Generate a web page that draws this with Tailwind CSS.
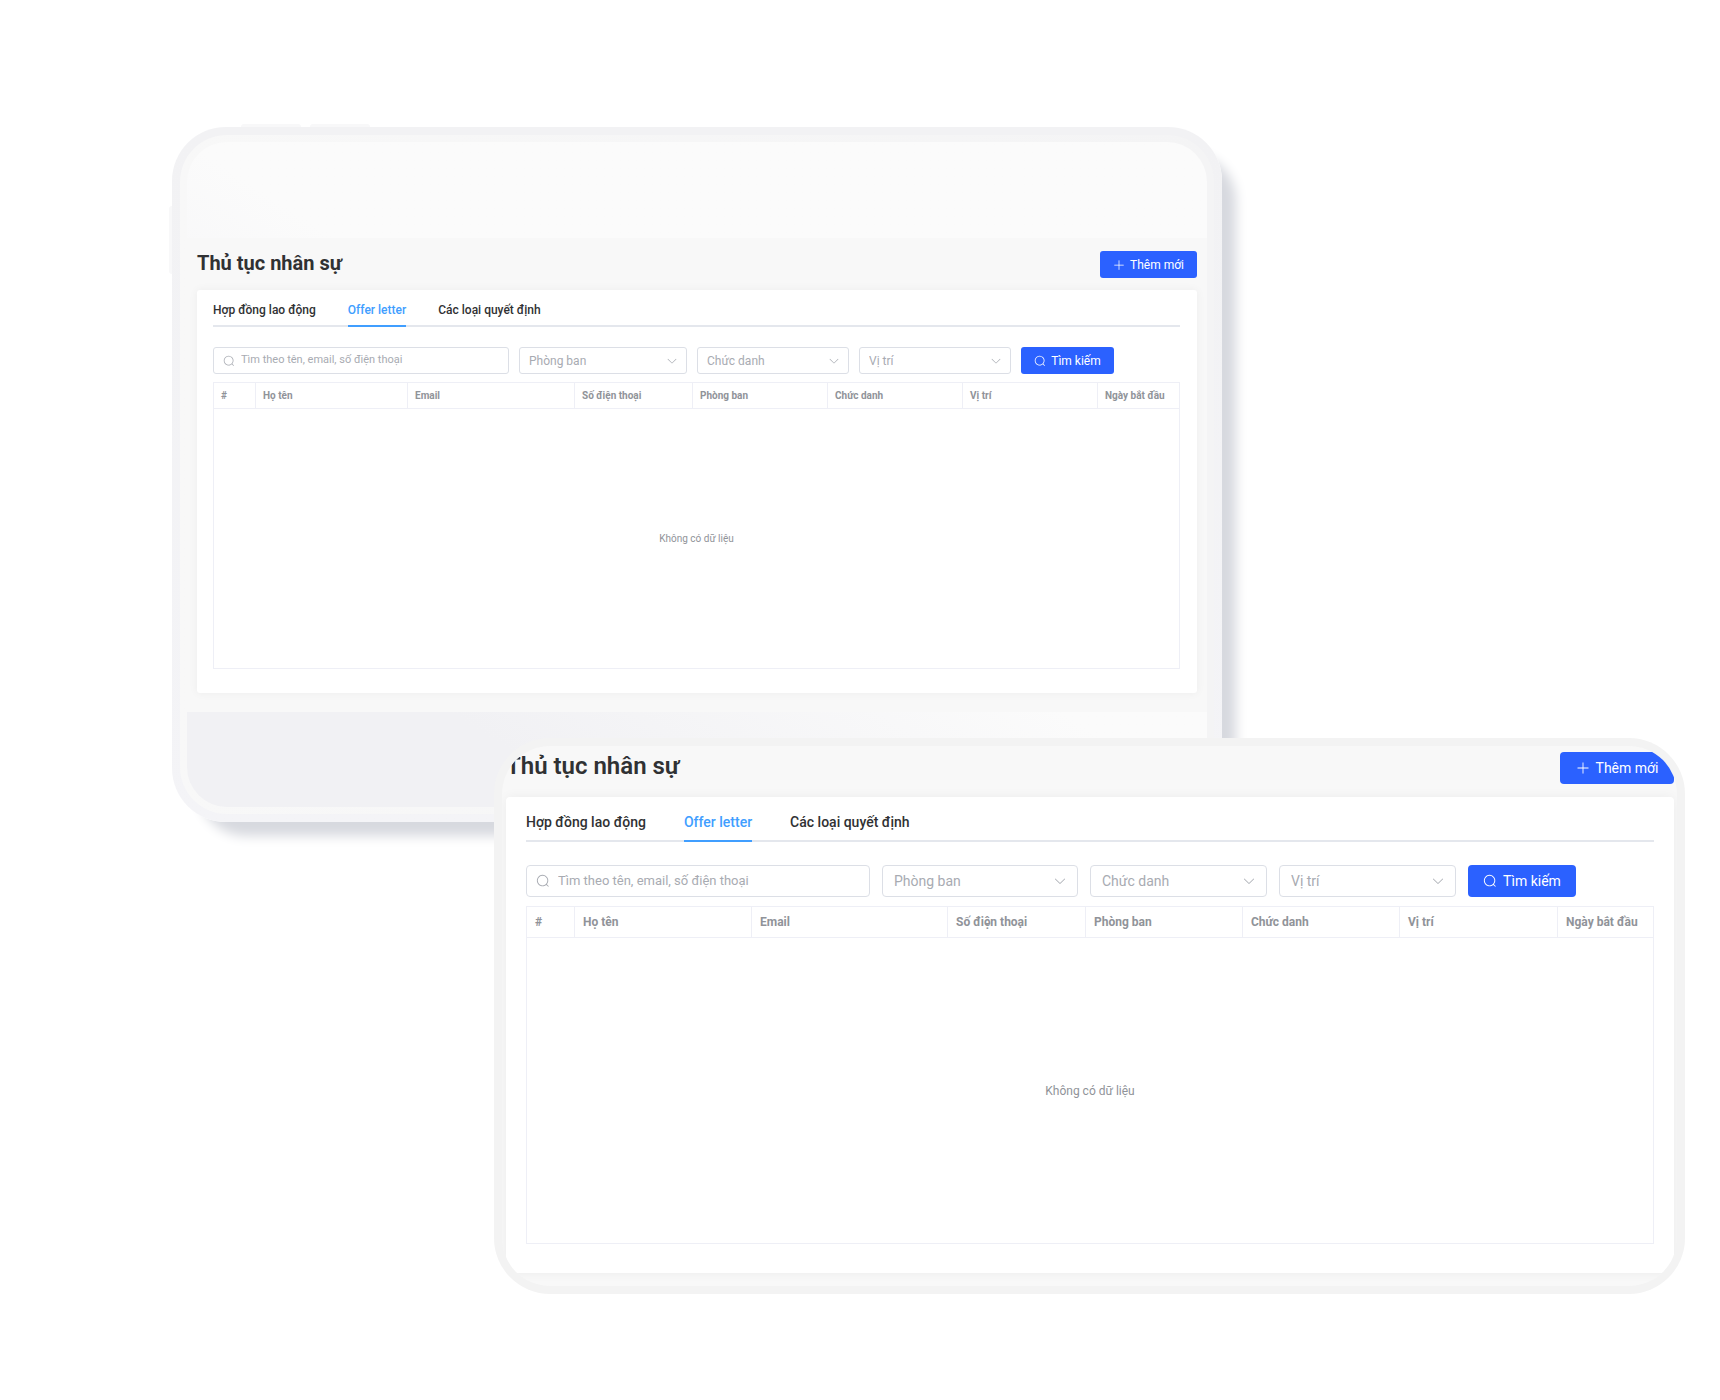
<!DOCTYPE html>
<html lang="vi">
<head>
    <meta charset="UTF-8">
    <meta name="viewport" content="width=device-width, initial-scale=1.0">
    <title>Thủ tục nhân sự</title>
    <script src="https://cdn.jsdelivr.net/npm/@tailwindcss/browser@4"></script>
</head>
<body class="bg-white font-['Roboto',sans-serif] text-[#303133]">
    <svg class="hidden" aria-hidden="true">
        <symbol id="icon-search" viewBox="0 0 1024 1024">
            <path fill="currentColor" d="m795.904 750.72 124.992 124.928a32 32 0 0 1-45.248 45.248L750.656 795.904a416 416 0 1 1 45.248-45.184zM480 832a352 352 0 1 0 0-704 352 352 0 0 0 0 704z"/>
        </symbol>
        <symbol id="icon-down" viewBox="0 0 1024 1024">
            <path fill="currentColor" d="M831.872 340.864 512 652.672 192.128 340.864a30.592 30.592 0 0 0-42.752 0 29.12 29.12 0 0 0 0 41.6L489.664 714.24a32 32 0 0 0 44.672 0l340.288-331.712a29.12 29.12 0 0 0 0-41.728 30.592 30.592 0 0 0-42.752 0z"/>
        </symbol>
        <symbol id="icon-plus" viewBox="0 0 1024 1024">
            <path fill="currentColor" d="M480 480V128a32 32 0 0 1 64 0v352h352a32 32 0 1 1 0 64H544v352a32 32 0 1 1-64 0V544H128a32 32 0 0 1 0-64h352z"/>
        </symbol>
    </svg>
    <main class="pt-[127px] pb-[105px]">
        <!-- Tablet -->
        <section class="relative ml-[172px] mr-[498px] rounded-[54px] bg-linear-to-b from-[#f2f2f4] to-[#f4f4f7] p-2 shadow-[20px_20px_12px_-6px_#d7d9df]">
            <!-- Hardware buttons -->
            <span class="absolute -top-[3px] left-[69px] h-[3px] w-[60px] rounded-t-sm bg-[#f8f8f9]"></span>
            <span class="absolute -top-[3px] left-[138px] h-[3px] w-[60px] rounded-t-sm bg-[#f8f8f9]"></span>
            <span class="absolute top-[79px] -left-[3px] h-[68px] w-[3px] rounded-l-sm bg-[#f8f8f9]"></span>
            <div class="rounded-[47px] bg-linear-to-r from-[#f8f8f8] to-[#f4f4f5] p-[7px]">
                <div class="overflow-hidden rounded-[40px] bg-linear-to-tr from-[#f1f1f4] from-20% to-[#fbfbfb] to-50% pt-[96px] pb-[95px]">
                    <div class="bg-[#f8f8f8] px-[10px] pt-[13px] pb-[19px]">
                        <header class="flex h-[27px] items-start justify-between">
                            <h1 class="text-[20px] leading-6 font-bold">Thủ tục nhân sự</h1>
                            <button class="flex h-[27px] w-[97px] items-center justify-center gap-[5px] rounded-[3px] bg-[#2b61ff] text-[12px] text-white">
                                <svg class="size-3"><use href="#icon-plus"/></svg>Thêm mới
                            </button>
                        </header>
                        <div class="mt-3 rounded-[3px] bg-white pt-[3px] pr-[17px] pb-[24px] pl-4 shadow-[0_0_10px_#0000000d]">
                            <nav class="flex h-[34px] gap-8 border-b-2 border-[#e4e7ed] text-[12px] font-medium">
                                <a href="#" class="flex items-center pt-[2px]">Hợp đồng lao động</a>
                                <a href="#" class="-mb-[2px] flex items-center border-b-2 border-[#409eff] pt-[2px] text-[#409eff]">Offer letter</a>
                                <a href="#" class="flex items-center pt-[2px]">Các loại quyết định</a>
                            </nav>
                            <form class="mt-5 flex gap-[10px] text-[12px] text-[#a8abb2]">
                                <label class="flex h-[27px] w-[296px] items-center gap-[6px] rounded-[3px] border border-[#dcdfe6] px-[9px]">
                                    <svg class="size-3 shrink-0"><use href="#icon-search"/></svg>
                                    <input type="text" aria-label="Tìm theo tên, email, số điện thoại" placeholder="Tìm theo tên, email, số điện thoại" class="w-full min-w-0 text-[11px] outline-none placeholder:text-[#a8abb2]">
                                </label>
                                <div class="relative">
                                    <select aria-label="Phòng ban" class="h-[27px] w-[168px] appearance-none rounded-[3px] border border-[#dcdfe6] bg-white pr-6 pl-[9px]"><option>Phòng ban</option></select>
                                    <svg class="pointer-events-none absolute top-2 right-[9px] size-3"><use href="#icon-down"/></svg>
                                </div>
                                <div class="relative">
                                    <select aria-label="Chức danh" class="h-[27px] w-[152px] appearance-none rounded-[3px] border border-[#dcdfe6] bg-white pr-6 pl-[9px]"><option>Chức danh</option></select>
                                    <svg class="pointer-events-none absolute top-2 right-[9px] size-3"><use href="#icon-down"/></svg>
                                </div>
                                <div class="relative">
                                    <select aria-label="Vị trí" class="h-[27px] w-[152px] appearance-none rounded-[3px] border border-[#dcdfe6] bg-white pr-6 pl-[9px]"><option>Vị trí</option></select>
                                    <svg class="pointer-events-none absolute top-2 right-[9px] size-3"><use href="#icon-down"/></svg>
                                </div>
                                <button type="button" class="flex h-[27px] w-[93px] items-center justify-center gap-[5px] rounded-[3px] bg-[#2b61ff] text-white">
                                    <svg class="size-3"><use href="#icon-search"/></svg>Tìm kiếm
                                </button>
                            </form>
                            <table class="mt-2 w-full table-fixed border-collapse border border-[#eeeff6] text-[10px] text-[#909399]">
                                <thead>
                                    <tr class="h-[26px] text-left">
                                        <th class="w-[42px] border border-[#eeeff6] px-[7px] font-bold">#</th>
                                        <th class="w-[152px] border border-[#eeeff6] px-[7px] font-bold">Họ tên</th>
                                        <th class="border border-[#eeeff6] px-[7px] font-bold">Email</th>
                                        <th class="w-[118px] border border-[#eeeff6] px-[7px] font-bold">Số điện thoại</th>
                                        <th class="w-[135px] border border-[#eeeff6] px-[7px] font-bold">Phòng ban</th>
                                        <th class="w-[135px] border border-[#eeeff6] px-[7px] font-bold">Chức danh</th>
                                        <th class="w-[135px] border border-[#eeeff6] px-[7px] font-bold">Vị trí</th>
                                        <th class="w-[82px] border border-[#eeeff6] px-[7px] font-bold">Ngày bắt đầu</th>
                                    </tr>
                                </thead>
                                <tbody>
                                    <tr><td colspan="8" class="h-[260px] text-center">Không có dữ liệu</td></tr>
                                </tbody>
                            </table>
                        </div>
                    </div>
                </div>
            </div>
        </section>

        <!-- Enlarged view -->
        <section class="relative -mt-[84px] mr-[35px] ml-[494px] rounded-[56px] bg-[#f3f3f3] p-2">
            <div class="overflow-hidden rounded-[48px] bg-[#f8f8f8] pt-[6px] pr-[3px] pb-[13px] pl-1">
                <header class="flex h-8 items-start justify-between">
                    <h2 class="text-[24px] leading-7 font-semibold">Thủ tục nhân sự</h2>
                    <button class="flex h-8 w-[114px] items-center justify-center gap-[6px] rounded-[4px] bg-[#2b61ff] text-[14px] text-white">
                        <svg class="size-[14px]"><use href="#icon-plus"/></svg>Thêm mới
                    </button>
                </header>
                <div class="mt-[13px] rounded-[4px] bg-white px-5 pt-1 pb-[29px] shadow-[0_0_12px_#0000000d]">
                    <nav class="flex h-[41px] gap-[38px] border-b-2 border-[#e4e7ed] text-[14px] font-medium">
                        <a href="#" class="flex items-center pt-[3px]">Hợp đồng lao động</a>
                        <a href="#" class="-mb-[2px] flex items-center border-b-2 border-[#409eff] pt-[3px] text-[#409eff]">Offer letter</a>
                        <a href="#" class="flex items-center pt-[3px]">Các loại quyết định</a>
                    </nav>
                    <form class="mt-[23px] flex gap-3 text-[14px] text-[#a8abb2]">
                        <label class="flex h-8 w-[344px] items-center gap-2 rounded-[4px] border border-[#dcdfe6] px-[9px]">
                            <svg class="size-[14px] shrink-0"><use href="#icon-search"/></svg>
                            <input type="text" aria-label="Tìm theo tên, email, số điện thoại" placeholder="Tìm theo tên, email, số điện thoại" class="w-full min-w-0 text-[13px] outline-none placeholder:text-[#a8abb2]">
                        </label>
                        <div class="relative">
                            <select aria-label="Phòng ban" class="h-8 w-[196px] appearance-none rounded-[4px] border border-[#dcdfe6] bg-white pr-7 pl-[11px]"><option>Phòng ban</option></select>
                            <svg class="pointer-events-none absolute top-[9px] right-[11px] size-[14px]"><use href="#icon-down"/></svg>
                        </div>
                        <div class="relative">
                            <select aria-label="Chức danh" class="h-8 w-[177px] appearance-none rounded-[4px] border border-[#dcdfe6] bg-white pr-7 pl-[11px]"><option>Chức danh</option></select>
                            <svg class="pointer-events-none absolute top-[9px] right-[11px] size-[14px]"><use href="#icon-down"/></svg>
                        </div>
                        <div class="relative">
                            <select aria-label="Vị trí" class="h-8 w-[177px] appearance-none rounded-[4px] border border-[#dcdfe6] bg-white pr-7 pl-[11px]"><option>Vị trí</option></select>
                            <svg class="pointer-events-none absolute top-[9px] right-[11px] size-[14px]"><use href="#icon-down"/></svg>
                        </div>
                        <button type="button" class="flex h-8 w-[108px] items-center justify-center gap-[6px] rounded-[4px] bg-[#2b61ff] text-white">
                            <svg class="size-[14px]"><use href="#icon-search"/></svg>Tìm kiếm
                        </button>
                    </form>
                    <table class="mt-[9px] w-full table-fixed border-collapse border border-[#eeeff6] text-[12px] text-[#909399]">
                        <thead>
                            <tr class="h-[31px] text-left">
                                <th class="w-[48px] border border-[#eeeff6] px-[8px] font-bold">#</th>
                                <th class="w-[177px] border border-[#eeeff6] px-[8px] font-bold">Họ tên</th>
                                <th class="border border-[#eeeff6] px-[8px] font-bold">Email</th>
                                <th class="w-[138px] border border-[#eeeff6] px-[8px] font-bold">Số điện thoại</th>
                                <th class="w-[157px] border border-[#eeeff6] px-[8px] font-bold">Phòng ban</th>
                                <th class="w-[157px] border border-[#eeeff6] px-[8px] font-bold">Chức danh</th>
                                <th class="w-[158px] border border-[#eeeff6] px-[8px] font-bold">Vị trí</th>
                                <th class="w-[96px] border border-[#eeeff6] px-[8px] font-bold">Ngày bắt đầu</th>
                            </tr>
                        </thead>
                        <tbody>
                            <tr><td colspan="8" class="h-[306px] text-center">Không có dữ liệu</td></tr>
                        </tbody>
                    </table>
                </div>
            </div>
        </section>
    </main>
</body>
</html>
